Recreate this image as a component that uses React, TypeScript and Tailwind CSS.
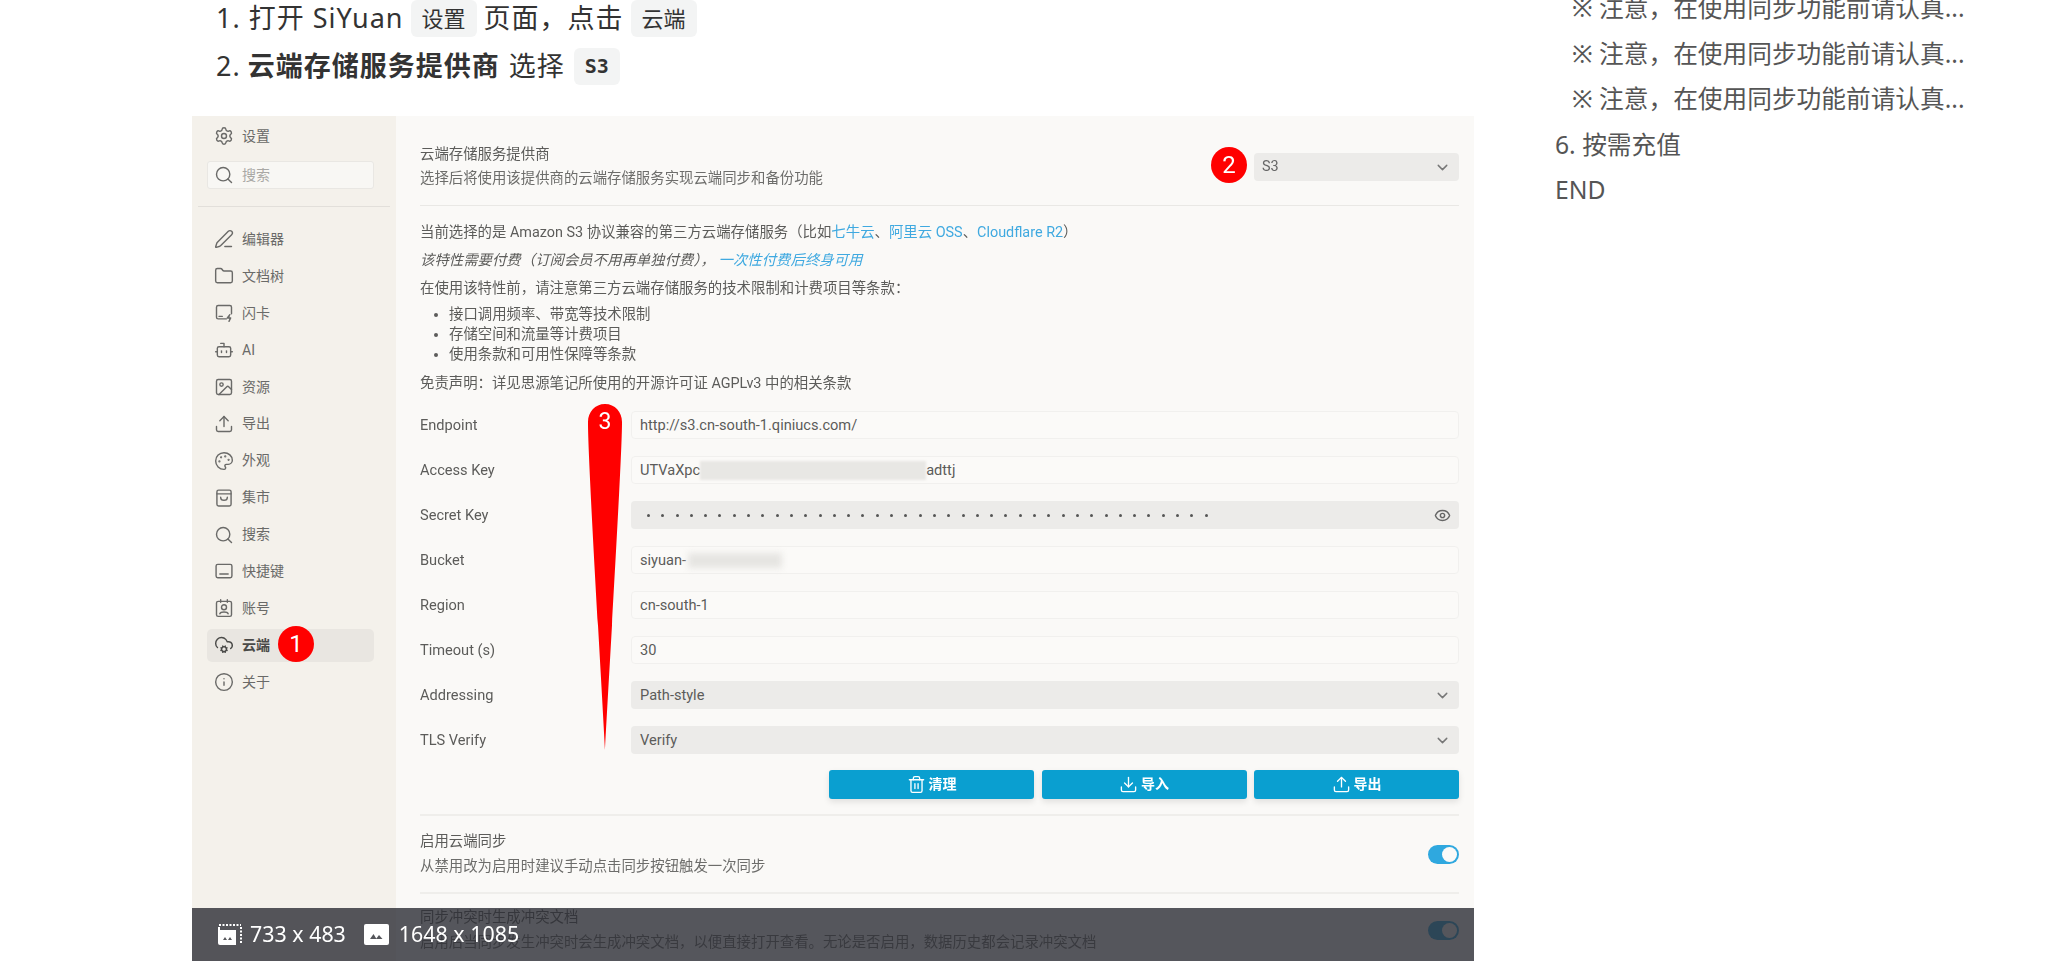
import {
  Bot,
  ChevronDown,
  CloudCog,
  Download,
  Eye,
  Folder,
  Image,
  Info,
  Palette,
  PenLine,
  Search,
  Settings,
  Trash2,
  Upload,
} from "lucide-react";
import type { ReactNode } from "react";

function CardIcon() {
  return (
    <svg width="20" height="20" viewBox="0 0 24 24" fill="none" stroke="currentColor" strokeWidth="1.7" strokeLinecap="round" strokeLinejoin="round">
      <path d="M15 19H5a2 2 0 0 1-2-2V5a2 2 0 0 1 2-2h14a2 2 0 0 1 2 2v8" />
      <path d="M6 16h4" />
      <path fill="currentColor" d="M19 14l-3 4h4l-2 4" />
    </svg>
  );
}

function BagIcon() {
  return (
    <svg width="20" height="20" viewBox="0 0 24 24" fill="none" stroke="currentColor" strokeWidth="1.7" strokeLinecap="round" strokeLinejoin="round">
      <rect x="3.5" y="2.5" width="17" height="19" rx="2" />
      <path d="M3.5 7h17" />
      <path d="M8 11c0 5 8 5 8 0" />
    </svg>
  );
}

function KeyboardIcon() {
  return (
    <svg width="20" height="20" viewBox="0 0 24 24" fill="none" stroke="currentColor" strokeWidth="1.7" strokeLinecap="round" strokeLinejoin="round">
      <rect x="2.5" y="4" width="19" height="16" rx="2" />
      <path d="M7 15.5h10" />
    </svg>
  );
}

function AccountIcon() {
  return (
    <svg width="20" height="20" viewBox="0 0 24 24" fill="none" stroke="currentColor" strokeWidth="1.7" strokeLinecap="round" strokeLinejoin="round">
      <rect x="3" y="4" width="18" height="18" rx="2" />
      <path d="M8 2v3M16 2v3" />
      <circle cx="12" cy="11" r="3" />
      <path d="M7 19c1-3 9-3 10 0" />
    </svg>
  );
}

const menu: { label: string; icon: ReactNode; active?: boolean }[] = [
  { label: "编辑器", icon: <PenLine size={20} strokeWidth={1.7} /> },
  { label: "文档树", icon: <Folder size={20} strokeWidth={1.7} /> },
  { label: "闪卡", icon: <CardIcon /> },
  { label: "AI", icon: <Bot size={20} strokeWidth={1.7} /> },
  { label: "资源", icon: <Image size={20} strokeWidth={1.7} /> },
  { label: "导出", icon: <Upload size={20} strokeWidth={1.7} /> },
  { label: "外观", icon: <Palette size={20} strokeWidth={1.7} /> },
  { label: "集市", icon: <BagIcon /> },
  { label: "搜索", icon: <Search size={20} strokeWidth={1.7} /> },
  { label: "快捷键", icon: <KeyboardIcon /> },
  { label: "账号", icon: <AccountIcon /> },
  { label: "云端", icon: <CloudCog size={20} strokeWidth={1.7} />, active: true },
  { label: "关于", icon: <Info size={20} strokeWidth={1.7} /> },
];

function Sidebar() {
  return (
    <aside className="relative w-[204px] shrink-0 bg-[#f4f1eb] text-[14px] text-[#6a6a68]">
      <div className="flex h-[40px] items-center gap-[8.5px] pl-[21.5px]">
        <Settings size={20} strokeWidth={1.7} />
        <span>设置</span>
      </div>
      <div className="ml-[15px] mr-[22px] mt-[5px] flex h-[28px] items-center gap-[8.5px] rounded-[3px] border border-[#e9e7e3] bg-[#f8f7f4] pl-[5.5px] text-[#a9a8a5]">
        <Search size={20} strokeWidth={1.7} className="text-[#6a6a68]" />
        <span>搜索</span>
      </div>
      <div className="mx-[6px] mt-[17px] h-[1px] bg-[#e2dfda]" />
      <div className="mt-[14px]">
        {menu.map((item) => (
          <div key={item.label} className="flex h-[36.9px] items-center pl-[15px] pr-[22px]">
            <div
              className={
                item.active
                  ? "flex h-[33px] w-full items-center gap-[8.5px] rounded-[5px] bg-[#e9e6e1] pl-[6.5px] font-semibold text-[#4a4a48]"
                  : "flex h-[33px] w-full items-center gap-[8.5px] pl-[6.5px]"
              }
            >
              {item.icon}
              <span>{item.label}</span>
            </div>
          </div>
        ))}
      </div>
      {/* badge 1 */}
      <div className="absolute left-[86px] top-[510px] flex h-[36px] w-[36px] items-center justify-center rounded-full bg-[#ff0000] text-[24px] text-white">
        1
      </div>
    </aside>
  );
}

function Field({ label, children, tone = "input" }: { label: string; children: ReactNode; tone?: "input" | "select" }) {
  return (
    <div className="flex h-[28px] items-center">
      <div className="w-[211px] shrink-0 pt-[1px] text-[14.6px] text-[#5c5c5a]">{label}</div>
      <div
        className={
          tone === "input"
            ? "relative flex h-[28px] flex-1 items-center rounded-[4px] border border-[#f1f0ee] bg-[#fbfaf8] pl-[8px] pr-[8px] pt-[1px] text-[14.6px] text-[#5c5c5a]"
            : "relative flex h-[28px] flex-1 items-center rounded-[4px] bg-[#ecebe9] pl-[9px] pr-[8px] pt-[1px] text-[14.6px] text-[#5c5c5a]"
        }
      >
        {children}
      </div>
    </div>
  );
}

function Chevron() {
  return <ChevronDown size={17} className="ml-auto text-[#777]" />;
}

function Toggle() {
  return (
    <div className="flex h-[19px] w-[31px] shrink-0 items-center justify-end rounded-full bg-[#2fa8df] pr-[2px]">
      <div className="h-[15px] w-[15px] rounded-full bg-[#fbfaf8]" />
    </div>
  );
}

function ActionButton({ icon, label }: { icon: ReactNode; label: string }) {
  return (
    <div className="flex h-[29px] w-[205px] items-center justify-center gap-[3px] rounded-[3px] bg-[#0a9fd0] text-[14px] font-bold text-white shadow-[0_3px_6px_rgba(0,0,0,0.1)]">
      {icon}
      <span>{label}</span>
    </div>
  );
}

function CloudSettings() {
  const dots = Array.from({ length: 40 });
  return (
    <main className="relative flex-1 pl-[24px] pr-[15px] text-[14.4px] text-[#5c5c5a]">
      <div className="flex items-start justify-between pt-[27px]">
        <div>
          <div className="leading-[24px]">云端存储服务提供商</div>
          <div className="leading-[24px] text-[#6d6d6b]">选择后将使用该提供商的云端存储服务实现云端同步和备份功能</div>
        </div>
        <div className="mt-[10px] flex h-[28px] w-[205px] items-center rounded-[4px] bg-[#ecebe9] pl-[8px] pr-[8px] text-[#666]">
          S3
          <Chevron />
        </div>
      </div>
      <div className="mt-[14px] h-[1px] bg-[#e9e8e5]" />

      <div className="mt-[13px] leading-[28px]">
        当前选择的是 Amazon S3 协议兼容的第三方云端存储服务（比如<span className="text-[#3fa9e0]">七牛云</span>、
        <span className="text-[#3fa9e0]">阿里云 OSS</span>、<span className="text-[#3fa9e0]">Cloudflare R2</span>）
      </div>
      <div className="italic leading-[28px]">
        该特性需要付费（订阅会员不用再单独付费）， <span className="text-[#3fa9e0]">一次性付费后终身可用</span>
      </div>
      <div className="leading-[28px]">在使用该特性前，请注意第三方云端存储服务的技术限制和计费项目等条款：</div>
      <ul className="mt-[2px] list-disc pl-[29px] leading-[20px]">
        <li>接口调用频率、带宽等技术限制</li>
        <li>存储空间和流量等计费项目</li>
        <li>使用条款和可用性保障等条款</li>
      </ul>
      <div className="mt-[5px] leading-[28px]">免责声明：详见思源笔记所使用的开源许可证 AGPLv3 中的相关条款</div>

      <div className="mt-[13px] flex flex-col gap-[17px]">
        <Field label="Endpoint">http://s3.cn-south-1.qiniucs.com/</Field>
        <Field label="Access Key">
          <span>UTVaXpc</span>
          <span className="h-[19px] w-[226px] shrink-0 bg-[#e8e7e4] blur-[1px]" />
          <span>adttj</span>
        </Field>
        <Field label="Secret Key" tone="select">
          <div className="ml-[7px] flex gap-[11.3px]">
            {dots.map((_, i) => (
              <span key={i} className="h-[3px] w-[3px] rounded-full bg-[#555]" />
            ))}
          </div>
          <Eye size={17} className="ml-auto text-[#666]" />
        </Field>
        <Field label="Bucket">
          <span>siyuan-</span>
          <span className="ml-[2px] h-[15px] w-[94px] bg-[#e6e5e2] blur-[3px]" />
        </Field>
        <Field label="Region">cn-south-1</Field>
        <Field label="Timeout (s)">30</Field>
        <Field label="Addressing" tone="select">
          Path-style
          <Chevron />
        </Field>
        <Field label="TLS Verify" tone="select">
          Verify
          <Chevron />
        </Field>
      </div>

      <div className="mt-[16px] flex justify-end gap-[7.5px]">
        <ActionButton icon={<Trash2 size={19} strokeWidth={1.7} />} label="清理" />
        <ActionButton icon={<Download size={19} strokeWidth={1.7} />} label="导入" />
        <ActionButton icon={<Upload size={19} strokeWidth={1.7} />} label="导出" />
      </div>
      <div className="mt-[15px] h-[2px] bg-[#efeeeb]" />

      <div className="mt-[14px] flex items-center justify-between">
        <div>
          <div className="leading-[24px]">启用云端同步</div>
          <div className="mt-[1px] leading-[24px] text-[#6d6d6b]">从禁用改为启用时建议手动点击同步按钮触发一次同步</div>
        </div>
        <Toggle />
      </div>
      <div className="mt-[13px] h-[2px] bg-[#efeeeb]" />

      <div className="mt-[12px] flex items-center justify-between">
        <div>
          <div className="leading-[24px]">同步冲突时生成冲突文档</div>
          <div className="mt-[1px] leading-[24px] text-[#6d6d6b]">
            启用后当同步发生冲突时会生成冲突文档，以便直接打开查看。无论是否启用，数据历史都会记录冲突文档
          </div>
        </div>
        <Toggle />
      </div>

      {/* badge 2 */}
      <div className="absolute left-[815px] top-[31px] flex h-[36px] w-[36px] items-center justify-center rounded-full bg-[#ff0000] text-[24px] text-white">
        2
      </div>

      {/* badge 3, the long pin */}
      <div className="absolute left-[191px] top-[288px] h-[347px] w-[36px]">
        <svg width="36" height="347" viewBox="0 0 36 347" className="absolute inset-0">
          <path d="M18 0C28 0 35 8 35 18C35 60 19 320 18 346C17 320 1 60 1 18C1 8 8 0 18 0Z" fill="#ff0000" />
        </svg>
        <div className="relative pt-[2px] text-center text-[23px] leading-[32px] text-white">3</div>
      </div>
    </main>
  );
}

function ViewportIcon() {
  return (
    <svg width="24" height="21" viewBox="0 0 24 21" fill="none">
      <path d="M1 1h22" stroke="#fff" strokeWidth="2" strokeDasharray="2 1.5" />
      <path d="M23 3v17" stroke="#fff" strokeWidth="2" strokeDasharray="2 1.5" />
      <path d="M0 6h18v15H2a2 2 0 0 1-2-2Z" fill="#fff" />
      <path d="M0 3h2v3H0Z" fill="#fff" />
      <path d="M5 16l2-3 2 3ZM10 16l2-3 2 3Z" fill="#55565b" />
    </svg>
  );
}

function PictureIcon() {
  return (
    <svg width="25" height="21" viewBox="0 0 25 21">
      <rect width="25" height="21" rx="2" fill="#fff" />
      <path d="M6 15l3.5-5 3 5ZM12 15l3-4 3.5 4Z" fill="#55565b" />
    </svg>
  );
}

export default function App() {
  return (
    <div className="flex h-[971px] overflow-hidden bg-white font-['Noto_Sans','Noto_Sans_CJK_SC',sans-serif]">
      <div className="ml-[192px] w-[1282px] shrink-0">
        <ol className="-mt-[6px] pl-[24px] text-[27px] leading-[48px] tracking-[1px] text-[#333]">
          <li className="flex items-center">
            1. 打开 SiYuan
            <span className="mx-[7px] rounded-[6px] bg-[#f3f4f4] px-[11px] text-[22px] leading-[37px] tracking-normal">设置</span>
            页面，点击
            <span className="mx-[7px] rounded-[6px] bg-[#f3f4f4] px-[11px] text-[22px] leading-[37px] tracking-normal">云端</span>
          </li>
          <li className="flex items-center">
            2. <strong className="ml-[7px] font-bold">云端存储服务提供商</strong>
            <span className="ml-[9px]">选择</span>
            <span className="ml-[9px] rounded-[6px] bg-[#f3f4f4] px-[11px] font-['DejaVu_Sans_Mono',monospace] text-[20px] font-bold leading-[37px] tracking-normal">S3</span>
          </li>
        </ol>

        <div className="relative mt-[26px] h-[845px] overflow-hidden bg-[#faf9f7] font-['Roboto','Noto_Sans_CJK_SC',sans-serif]">
          <div className="flex h-full blur-[0.5px]">
            <Sidebar />
            <CloudSettings />
          </div>
          <div className="absolute inset-x-0 bottom-0 flex h-[53px] items-center bg-[#2c2d34]/80 pl-[26px] font-['Noto_Sans',sans-serif] text-[21.4px] text-white">
            <ViewportIcon />
            <span className="ml-[8px]">733 x 483</span>
            <span className="ml-[18px]">
              <PictureIcon />
            </span>
            <span className="ml-[10px]">1648 x 1085</span>
          </div>
        </div>
      </div>

      <div className="ml-[81px] -mt-[15px] text-[24.7px] leading-[45.5px] text-[#555]">
        <div className="pl-[17px]">※ 注意，在使用同步功能前请认真...</div>
        <div className="pl-[17px]">※ 注意，在使用同步功能前请认真...</div>
        <div className="pl-[17px]">※ 注意，在使用同步功能前请认真...</div>
        <div>6. 按需充值</div>
        <div>END</div>
      </div>
    </div>
  );
}
